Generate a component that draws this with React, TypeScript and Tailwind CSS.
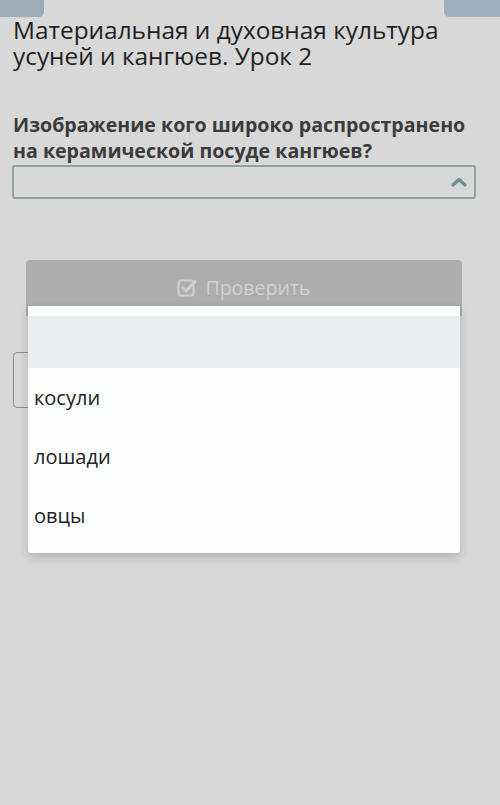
export default function App() {
    const options = ['косули', 'лошади', 'овцы'];
    return (
        <div className="relative w-[500px] h-[805px] bg-[#d8d8d8] overflow-hidden" style={{ fontFamily: '"Open Sans", "Noto Sans", sans-serif' }}>
            {/* top tabs */}
            <div className="flex justify-between h-[17px]">
                <div className="w-[44px] h-[17px] bg-[#9babb7] rounded-br-[5px]"></div>
                <div className="w-[56px] h-[17px] bg-[#9eb0bd] rounded-bl-[5px]"></div>
            </div>

            <h1 className="px-[13px] text-[24.4px] leading-[26px] text-[#1f1f1f] font-normal">
                Материальная и духовная культура<br />усуней и кангюев. Урок 2
            </h1>

            <div className="mt-[43px] px-[13px]">
                <p className="text-[19.6px] leading-[26px] font-bold text-[#3b3b3b] whitespace-nowrap">
                    Изображение кого широко распространено<br />на керамической посуде кангюев?
                </p>
                <div className="mt-[1px] mr-[11px] -ml-[1px] h-[34px] border-2 border-[#8fa2a4] rounded-[3px] flex items-center justify-end pr-[7px]">
                    <svg width="16" height="10" viewBox="0 0 16 10" fill="none">
                        <path d="M2 8 L8 2.5 L14 8" stroke="#6f8b8d" strokeWidth="3.2" strokeLinecap="round" strokeLinejoin="round" />
                    </svg>
                </div>
            </div>

            <div className="mt-[61px] mx-[26px] mr-[38px] h-[56px] bg-[#adadad] rounded-t-[4px] flex justify-center pt-[15px]">
                <div className="flex items-start gap-[8px] text-[19.5px] leading-[26px] text-[#d0d0d0]">
                    <svg width="20" height="20" viewBox="0 0 20 20" fill="none" className="mt-[3px]">
                        <rect x="1.5" y="2.5" width="15" height="15" rx="2.5" stroke="#d0d0d0" strokeWidth="2.2" />
                        <path d="M5.5 9.5 L9 13 L18 3.5" stroke="#d0d0d0" strokeWidth="3" strokeLinecap="round" strokeLinejoin="round" />
                    </svg>
                    <span>Проверить</span>
                </div>
            </div>

            <div className="mt-[36px] ml-[13px] w-[120px] h-[56px] border border-[#8a8a8a] rounded-[4px]"></div>

            {/* open dropdown list */}
            <div className="absolute left-[28px] top-[306px] w-[432px] bg-[#fcfefe] pt-[10px] pb-[8px] rounded-b-[3px] shadow-[0_4px_10px_rgba(0,0,0,0.18)]">
                <div className="h-[52px] bg-[#e8eef1]"></div>
                {options.map((o) => (
                    <div key={o} className="h-[59px] flex items-center px-[6px] text-[20px] text-[#222222]">
                        {o}
                    </div>
                ))}
            </div>
        </div>
    );
}
